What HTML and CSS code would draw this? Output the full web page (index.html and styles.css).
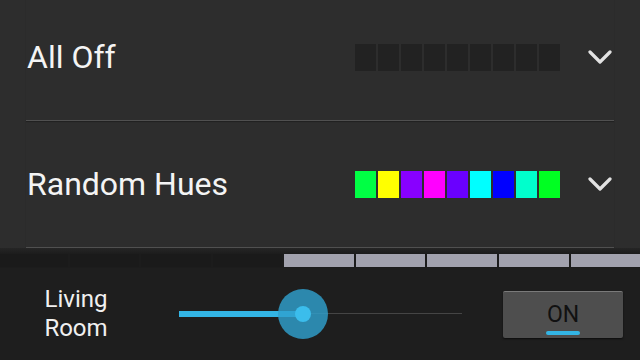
FILE: index.html
```html
<!DOCTYPE html>
<html lang="en">
<head>
  <meta charset="UTF-8" />
  <meta name="viewport" content="width=device-width, initial-scale=1.0"/>
  <title>Scenes</title>
  <link rel="stylesheet" href="styles.css">
</head>
<body>
  <div class="screen">
    <div class="list">
      <div class="scene first">
        <span class="scene-name">All Off</span>
        <div class="swatches">
          <span class="sw off"></span><span class="sw off"></span><span class="sw off"></span>
          <span class="sw off"></span><span class="sw off"></span><span class="sw off"></span>
          <span class="sw off"></span><span class="sw off"></span><span class="sw off"></span>
        </div>
        <svg class="chevron" width="24" height="16" viewBox="0 0 24 16">
          <polyline points="2,3 12,13 22,3" fill="none" stroke="#e2e2e2" stroke-width="3.2" stroke-linecap="round" stroke-linejoin="round"/>
        </svg>
      </div>
      <div class="scene">
        <span class="scene-name">Random Hues</span>
        <div class="swatches">
          <span class="sw" style="background:#00ff44"></span>
          <span class="sw" style="background:#ffff00"></span>
          <span class="sw" style="background:#8800ff"></span>
          <span class="sw" style="background:#ff00ff"></span>
          <span class="sw" style="background:#6a00ff"></span>
          <span class="sw" style="background:#00ffff"></span>
          <span class="sw" style="background:#0000ff"></span>
          <span class="sw" style="background:#00ffcc"></span>
          <span class="sw" style="background:#00ff22"></span>
        </div>
        <svg class="chevron" width="24" height="16" viewBox="0 0 24 16">
          <polyline points="2,3 12,13 22,3" fill="none" stroke="#e2e2e2" stroke-width="3.2" stroke-linecap="round" stroke-linejoin="round"/>
        </svg>
      </div>
    </div>

    <div class="strip">
      <span class="seg"></span><span class="seg"></span><span class="seg"></span><span class="seg"></span>
      <span class="seg lit"></span><span class="seg lit"></span><span class="seg lit"></span><span class="seg lit"></span><span class="seg lit"></span>
    </div>

    <div class="panel">
      <div class="room">Living<br>Room</div>
      <div class="slider">
        <div class="track"></div>
        <div class="fill"></div>
        <div class="thumb"><span class="dot"></span></div>
      </div>
      <button class="toggle">ON</button>
    </div>
  </div>
</body>
</html>
```

FILE: styles.css
```css
html, body {
  margin: 0;
  padding: 0;
}

body {
  font-family: Roboto, "Liberation Sans", sans-serif;
  background: #1e1e1e;
  color: #f2f2f2;
}

.screen {
  width: 640px;
  height: 360px;
  overflow: hidden;
  display: flex;
  flex-direction: column;
}

.list {
  background: #2d2d2d;
  margin-top: -6px;
}

.scene {
  height: 126px;
  margin: 0 26px;
  display: flex;
  align-items: center;
  border-bottom: 1px solid #505050;
  box-shadow: 0 1px 1px rgba(0,0,0,0.25);
}

.scene-name {
  flex: 1;
  font-size: 32px;
  padding-left: 1px;
  color: #f4f4f4;
}

.swatches {
  display: flex;
  gap: 2px;
}

.sw {
  width: 21px;
  height: 27px;
}

.sw.off {
  background: #222222;
}

.chevron {
  margin-left: 28px;
  margin-right: 2px;
  display: block;
}

.strip {
  height: 19px;
  width: 642px;
  background: linear-gradient(to bottom, #252525 0, #1c1c1c 6px);
  display: flex;
  align-items: flex-end;
  gap: 2px;
  margin-left: -2px;
  padding-bottom: 1px;
}

.seg {
  flex: 1;
  height: 13px;
  background: #1a1a1a;
}

.seg.lit {
  background: #a2a2ae;
}

.panel {
  flex: 1;
  background: #1e1e1e;
  display: flex;
  align-items: center;
}

.room {
  width: 66px;
  margin-left: 43px;
  font-size: 24px;
  line-height: 29px;
  color: #f0f0f0;
  text-align: center;
}

.slider {
  position: relative;
  width: 283px;
  height: 50px;
  margin-left: 70px;
}

.track {
  position: absolute;
  left: 0;
  right: 0;
  top: 24px;
  height: 1px;
  background: #454545;
}

.fill {
  position: absolute;
  left: 0;
  top: 22px;
  width: 124px;
  height: 6px;
  background: #33b5e5;
}

.thumb {
  position: absolute;
  left: 99px;
  top: 0;
  width: 50px;
  height: 50px;
  border-radius: 50%;
  background: rgba(48, 160, 205, 0.82);
  display: flex;
  align-items: center;
  justify-content: center;
}

.dot {
  width: 16px;
  height: 16px;
  border-radius: 50%;
  background: #3bbdec;
}

.toggle {
  margin-left: 41px;
  width: 120px;
  height: 47px;
  background: #4e4e4e;
  border: none;
  border-top: 1px solid #7a7a7a;
  border-radius: 2px;
  box-shadow: 0 1px 2px rgba(0,0,0,0.6);
  font-family: Roboto, "Liberation Sans", sans-serif;
  font-size: 23px;
  color: #111111;
  padding: 0;
  position: relative;
}

.toggle::after {
  content: "";
  position: absolute;
  left: 43px;
  bottom: 3px;
  width: 34px;
  height: 4px;
  border-radius: 2px;
  background: #33b5e5;
}
```
